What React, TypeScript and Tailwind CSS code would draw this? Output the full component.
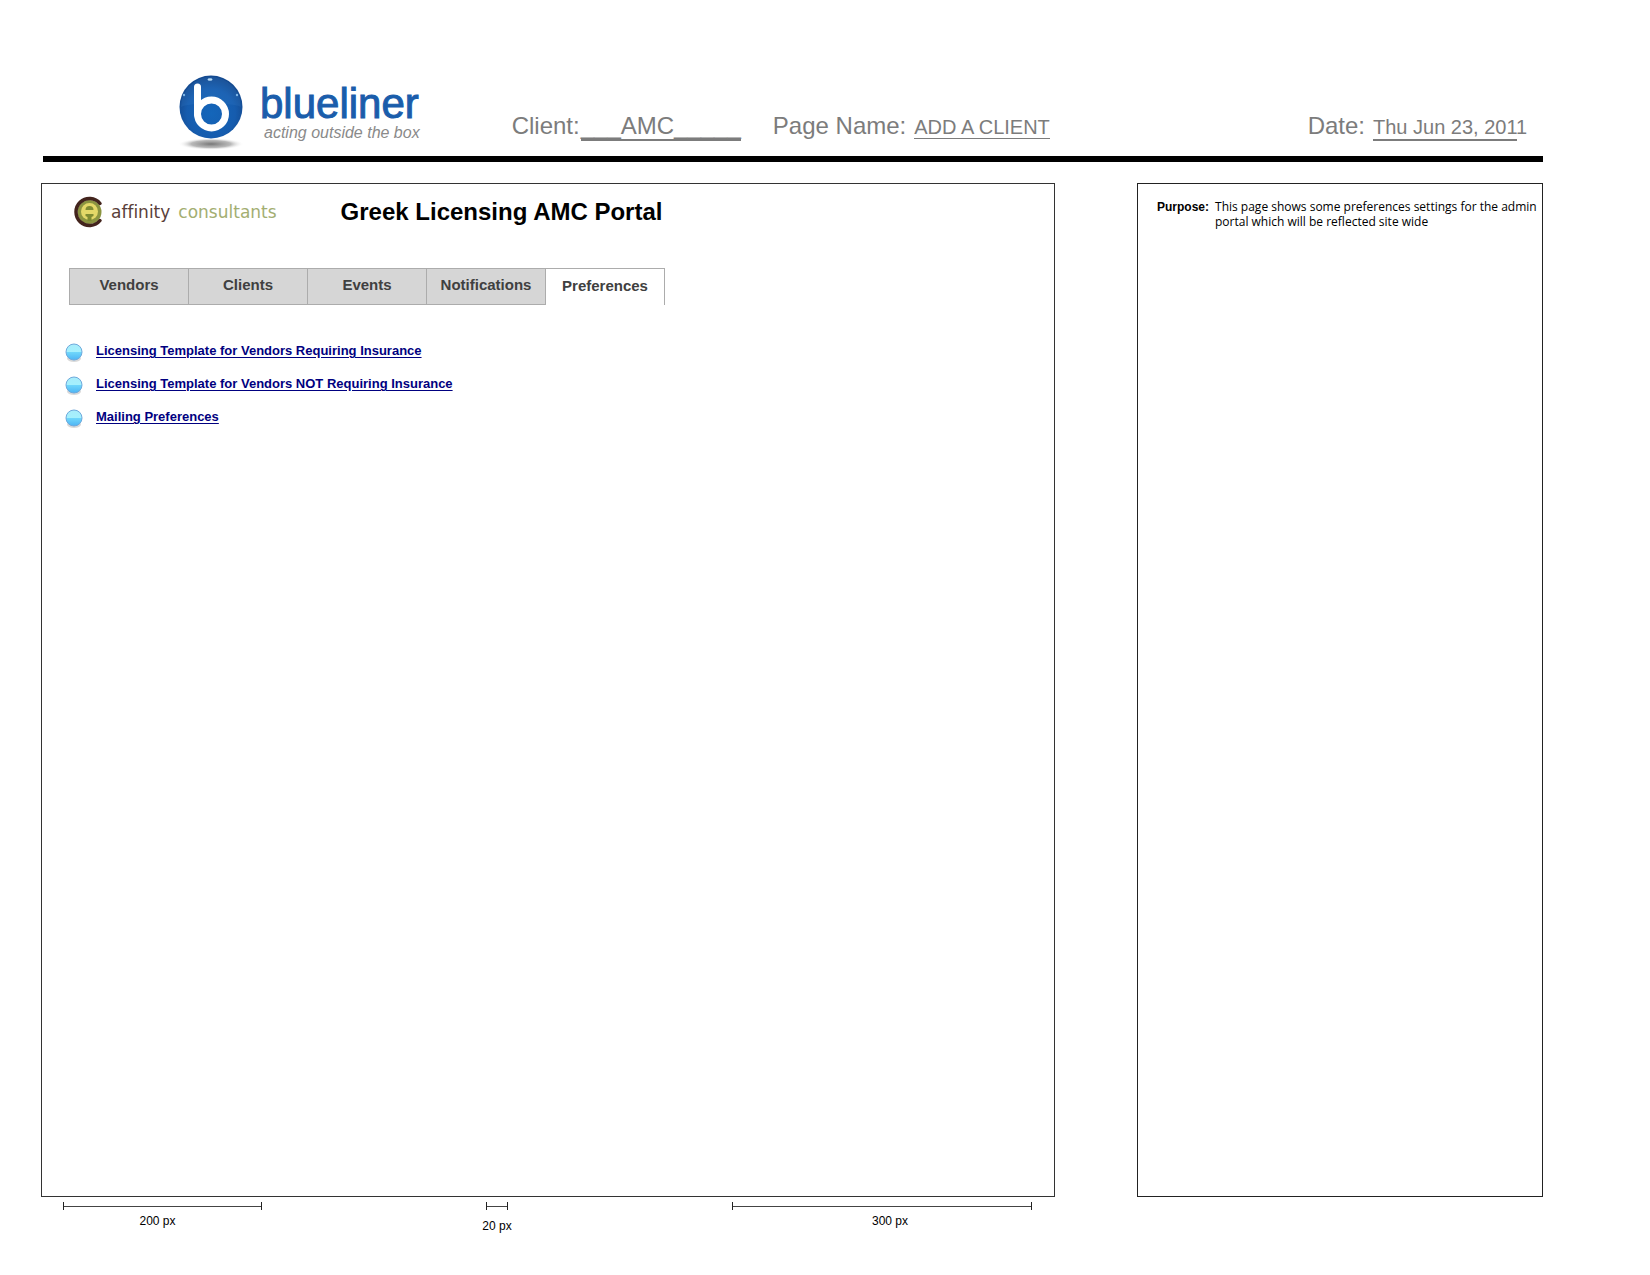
import React from "react";

function BluelinerLogo() {
  return (
    <div className="flex items-start">
      <svg width="68" height="76" viewBox="0 0 68 76" className="shrink-0" aria-hidden="true">
        <defs>
          <radialGradient id="ball" cx="50%" cy="60%" r="55%">
            <stop offset="0%" stopColor="#1466ba" />
            <stop offset="70%" stopColor="#165cae" />
            <stop offset="100%" stopColor="#144a90" />
          </radialGradient>
          <radialGradient id="shade">
            <stop offset="0%" stopColor="#5f5f5f" stopOpacity="0.85" />
            <stop offset="60%" stopColor="#8a8a8a" stopOpacity="0.6" />
            <stop offset="100%" stopColor="#ffffff" stopOpacity="0" />
          </radialGradient>
        </defs>
        <ellipse cx="33" cy="69" rx="33" ry="6" fill="url(#shade)" />
        <circle cx="33" cy="32" r="31.5" fill="url(#ball)" />
        <path d="M3 32C14 27 52 27 63 32A30 30 0 0 0 3 32Z" fill="#3b82cc" opacity="0.2" />
        <path d="M19.5 12V39" stroke="#fff" strokeWidth="7" strokeLinecap="round" />
        <circle cx="33.5" cy="39" r="14" fill="none" stroke="#fff" strokeWidth="7" />
        <ellipse cx="32" cy="4.5" rx="2.5" ry="1.2" fill="#b9dcf5" />
        <circle cx="6" cy="20" r="1.2" fill="#7db6e6" />
        <circle cx="59" cy="20" r="1.2" fill="#7db6e6" />
      </svg>
      <div className="ml-3.5 mt-2 whitespace-nowrap">
        <div className="text-[42px] leading-[42px] text-[#1a5dab] [-webkit-text-stroke:1px_#1a5dab]">blueliner</div>
        <div className="ml-1 text-[16px] leading-4 italic text-[#8a8a8a]">acting outside the box</div>
      </div>
    </div>
  );
}

function AffinityLogo() {
  return (
    <div className="flex items-center gap-[7px]">
      <svg width="30" height="32" viewBox="0 0 30 32" className="shrink-0" aria-hidden="true">
        <circle cx="15.5" cy="16" r="12" fill="#8b9440" />
        <path d="M26 7.5A13.5 13.5 0 1 0 26 24.5" fill="none" stroke="#43241d" strokeWidth="3.5" strokeLinecap="round" />
        <circle cx="15.5" cy="15.5" r="8.5" fill="#e4d868" />
        <path d="M11.5 14A4 4 0 0 1 19.5 14Z" fill="#7f8b33" />
        <path d="M11.5 18H19.5V20L17.5 21V25H13.5V21L11.5 20Z" fill="#7f8b33" />
      </svg>
      <div className="flex gap-2 font-['DejaVu_Sans',sans-serif] text-[17px] leading-6 [font-variant-ligatures:none]">
        <span className="text-[#5a403a]">affinity</span>
        <span className="text-[#a3ae72]">consultants</span>
      </div>
    </div>
  );
}

const tabs = ["Vendors", "Clients", "Events", "Notifications", "Preferences"];

const links = [
  "Licensing Template for Vendors Requiring Insurance",
  "Licensing Template for Vendors NOT Requiring Insurance",
  "Mailing Preferences",
];

function Bullet() {
  return (
    <svg width="20" height="22" viewBox="0 0 20 22" className="shrink-0" aria-hidden="true">
      <defs>
        <linearGradient id="bullet" x1="0" y1="0" x2="0" y2="1">
          <stop offset="0%" stopColor="#a8ecfb" />
          <stop offset="48%" stopColor="#a5f0fd" />
          <stop offset="52%" stopColor="#6fd6fb" />
          <stop offset="100%" stopColor="#4db4f4" />
        </linearGradient>
      </defs>
      <ellipse cx="10" cy="17.5" rx="7" ry="3.5" fill="#000" opacity="0.15" />
      <circle cx="10" cy="11" r="8" fill="url(#bullet)" stroke="#6fa9dc" />
    </svg>
  );
}

function Measure({ className, label, labelClass }: { className: string; label: string; labelClass: string }) {
  return (
    <div className={className}>
      <div className="flex h-2 items-center border-x border-[#222]">
        <div className="h-px w-full bg-[#444]" />
      </div>
      <div className={labelClass}>{label}</div>
    </div>
  );
}

export default function App() {
  return (
    <div className="bg-white pb-11 pl-[41px] pr-[107px] pt-[75px] font-['Liberation_Sans',Arial,sans-serif] text-black">
      <header className="ml-0.5 flex h-[87px] items-start border-b-[6px] border-black pl-[135px] text-2xl text-[#7c7c7c]">
        <BluelinerLogo />
        <div className="mt-[35px] flex flex-1 items-baseline whitespace-nowrap pl-[92px] leading-8">
          <span>Client:</span>
          <span className="ml-px border-b-2 border-[#7c7c7c] leading-[26px]">___AMC_____</span>
          <span className="ml-8">Page Name:</span>
          <span className="ml-2 border-b border-[#7c7c7c] text-xl leading-[22px]">ADD A CLIENT</span>
          <span className="ml-auto">Date:</span>
          <span className="ml-2 mr-[26px] w-36 border-b-2 border-[#7c7c7c] text-xl leading-6">Thu Jun 23, 2011</span>
        </div>
      </header>

      <div className="mt-[21px] grid grid-cols-[1014fr_406fr] gap-x-[82px]">
        <main className="min-h-[1014px] border border-[#333] pl-6 pt-3">
          <div className="flex h-8 items-center pl-2">
            <AffinityLogo />
            <h1 className="ml-16 whitespace-nowrap text-2xl font-bold">Greek Licensing AMC Portal</h1>
          </div>
          <nav className="ml-[3px] mt-10 flex">
            {tabs.map((tab, i) => (
              <button
                key={tab}
                type="button"
                className={
                  i === 4
                    ? "h-[37px] w-[120px] border-x border-t border-[#acacac] bg-white pb-0.5 text-[15px] font-bold text-[#404040]"
                    : "-mr-px h-[37px] w-[120px] border border-[#acacac] bg-[#d6d6d6] pb-0.5 text-[15px] font-bold text-[#404040]"
                }
              >
                {tab}
              </button>
            ))}
          </nav>
          <ul className="-ml-0.5 mt-9 flex flex-col">
            {links.map((link) => (
              <li key={link} className="flex h-[33px] items-start gap-3">
                <Bullet />
                <a href="#" className="text-[13px] font-bold leading-5 text-[#000080] underline underline-offset-2">
                  {link}
                </a>
              </li>
            ))}
          </ul>
        </main>

        <aside className="flex gap-1.5 border border-[#222] pl-[19px] pt-4">
          <span className="text-xs font-bold leading-[15px]">Purpose:</span>
          <p className="-mt-px font-['Open_Sans',sans-serif] text-xs leading-[15px]">
            This page shows some preferences settings for the admin portal which will be reflected site wide
          </p>
        </aside>

        <div className="flex items-start justify-between pl-[22px] pr-[23px] pt-[5px] text-xs leading-4">
          <Measure className="w-[199px]" label="200 px" labelClass="mt-[3px] pr-2.5 text-center" />
          <Measure className="w-[22px]" label="20 px" labelClass="-mx-2 mt-2 whitespace-nowrap text-center" />
          <Measure className="w-[300px]" label="300 px" labelClass="mt-[3px] pl-4 text-center" />
        </div>
      </div>
    </div>
  );
}
